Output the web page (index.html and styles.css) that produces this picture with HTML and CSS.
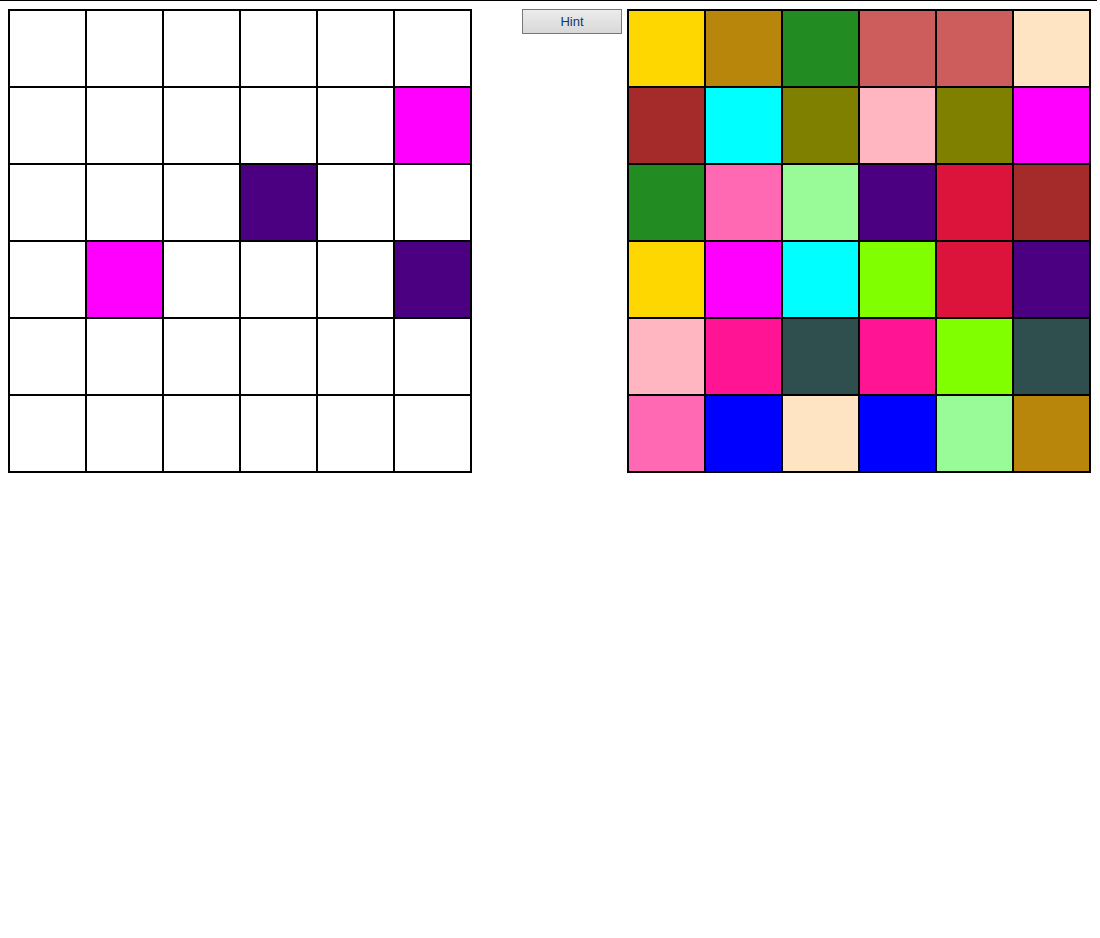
FILE: index.html
```html
<!DOCTYPE html>
<html>
<head>
<meta charset="utf-8">
<link rel="stylesheet" href="styles.css">
</head>
<body>
<div class="topline"></div>
<div class="page">
  <div class="grid">
    <div class="cell"></div><div class="cell"></div><div class="cell"></div><div class="cell"></div><div class="cell"></div><div class="cell"></div>
    <div class="cell"></div><div class="cell"></div><div class="cell"></div><div class="cell"></div><div class="cell"></div><div class="cell magenta"></div>
    <div class="cell"></div><div class="cell"></div><div class="cell"></div><div class="cell indigo"></div><div class="cell"></div><div class="cell"></div>
    <div class="cell"></div><div class="cell magenta"></div><div class="cell"></div><div class="cell"></div><div class="cell"></div><div class="cell indigo"></div>
    <div class="cell"></div><div class="cell"></div><div class="cell"></div><div class="cell"></div><div class="cell"></div><div class="cell"></div>
    <div class="cell"></div><div class="cell"></div><div class="cell"></div><div class="cell"></div><div class="cell"></div><div class="cell"></div>
  </div>
  <button class="hint">Hint</button>
  <div class="grid">
    <div class="cell gold"></div><div class="cell darkgoldenrod"></div><div class="cell forestgreen"></div><div class="cell indianred"></div><div class="cell indianred"></div><div class="cell bisque"></div>
    <div class="cell brown"></div><div class="cell cyan"></div><div class="cell olive"></div><div class="cell lightpink"></div><div class="cell olive"></div><div class="cell magenta"></div>
    <div class="cell forestgreen"></div><div class="cell hotpink"></div><div class="cell palegreen"></div><div class="cell indigo"></div><div class="cell crimson"></div><div class="cell brown"></div>
    <div class="cell gold"></div><div class="cell magenta"></div><div class="cell cyan"></div><div class="cell chartreuse"></div><div class="cell crimson"></div><div class="cell indigo"></div>
    <div class="cell lightpink"></div><div class="cell deeppink"></div><div class="cell darkslategray"></div><div class="cell deeppink"></div><div class="cell chartreuse"></div><div class="cell darkslategray"></div>
    <div class="cell hotpink"></div><div class="cell blue"></div><div class="cell bisque"></div><div class="cell blue"></div><div class="cell palegreen"></div><div class="cell darkgoldenrod"></div>
  </div>
</div>
</body>
</html>
```
FILE: styles.css
```css
html, body {
  margin: 0;
  padding: 0;
  background: #fff;
  font-family: "Liberation Sans", Arial, sans-serif;
}
.topline {
  height: 1px;
  background: #000;
  margin-right: 3px;
}
.page {
  display: flex;
  align-items: flex-start;
  padding: 8px 0 0 8px;
}
.grid {
  display: grid;
  grid-template-columns: repeat(6, 75px);
  grid-auto-rows: 75px;
  gap: 2px;
  padding: 2px;
  background: #000;
}
.cell { background: #fff; }
.hint {
  box-sizing: border-box;
  width: 100px;
  height: 25px;
  margin: 0 5px 0 50px;
  padding: 0;
  border: 1px solid #777;
  background: linear-gradient(#ececec, #d8d8d8);
  color: #0a3a70;
  font-family: "Liberation Sans", Arial, sans-serif;
  font-size: 13px;
  line-height: 23px;
}
.gold { background: #FFD700; }
.darkgoldenrod { background: #B8860B; }
.forestgreen { background: #228B22; }
.indianred { background: #CD5C5C; }
.bisque { background: #FFE4C4; }
.brown { background: #A52A2A; }
.cyan { background: #00FFFF; }
.olive { background: #808000; }
.lightpink { background: #FFB6C1; }
.magenta { background: #FF00FF; }
.hotpink { background: #FF69B4; }
.palegreen { background: #98FB98; }
.indigo { background: #4B0082; }
.crimson { background: #DC143C; }
.chartreuse { background: #7FFF00; }
.deeppink { background: #FF1493; }
.darkslategray { background: #2F4F4F; }
.blue { background: #0000FF; }
```
